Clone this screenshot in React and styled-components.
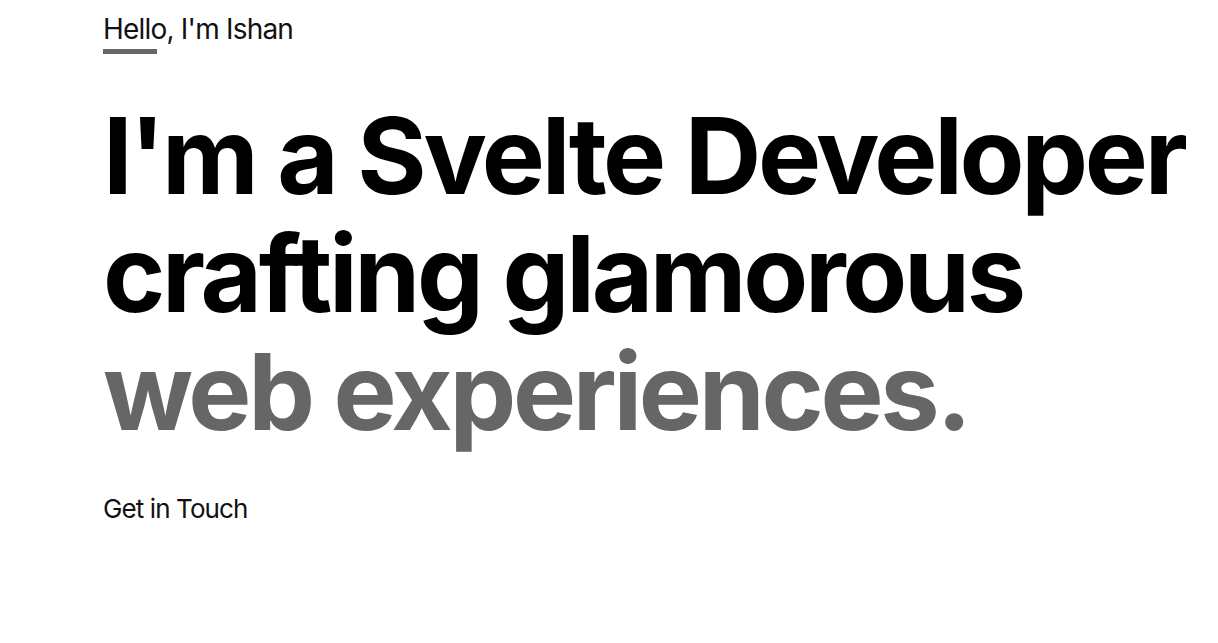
import React from 'react';
import styled, {createGlobalStyle} from 'styled-components';

const GlobalStyle = createGlobalStyle`
  body {
    margin: 0;
    background: #ffffff;
    font-family: Inter, "Noto Sans", sans-serif;
    color: #111111;
  }
`;

const Hero = styled.section`
  display: flex;
  flex-direction: column;
  align-items: flex-start;
  padding: 10px 0 0 103px;
`;

const Greeting = styled.div`
  font-size: 28px;
  line-height: 38px;
  letter-spacing: -0.8px;
  color: #111111;
`;

const Underline = styled.span`
  display: block;
  width: 54px;
  height: 5px;
  margin-top: 1px;
  background: #666666;
`;

const Headline = styled.h1`
  margin: 43px 0 0;
  font-size: 106px;
  line-height: 118px;
  font-weight: 700;
  letter-spacing: -3.3px;
  color: #000000;
`;

const Line = styled.span`
  display: block;
  white-space: nowrap;
  color: ${props => (props.muted ? '#666666' : '#000000')};
`;

const ContactLink = styled.a`
  margin-top: 40px;
  font-size: 26px;
  line-height: 36px;
  letter-spacing: -0.9px;
  color: #111111;
  text-decoration: none;
`;

const App = () => {
  return (
    <>
      <GlobalStyle />
      <Hero>
        <Greeting>
          Hello, I'm Ishan
          <Underline />
        </Greeting>
        <Headline>
          <Line>I'm a Svelte Developer</Line>
          <Line>crafting glamorous</Line>
          <Line muted>web experiences.</Line>
        </Headline>
        <ContactLink href="#contact">Get in Touch</ContactLink>
      </Hero>
    </>
  );
};

export default App;
